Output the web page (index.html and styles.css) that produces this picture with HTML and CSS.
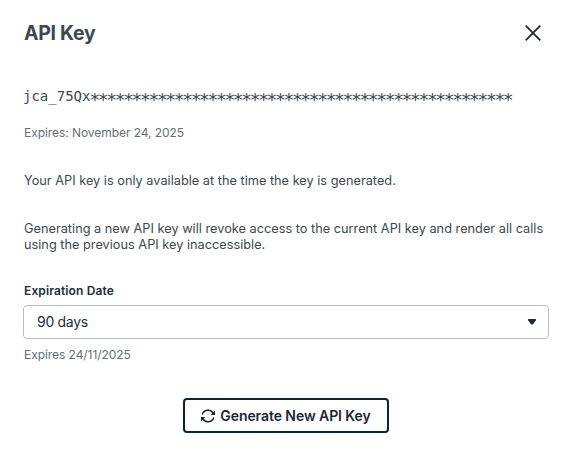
FILE: index.html
```html
<!DOCTYPE html>
<html lang="en">
<head>
    <meta charset="UTF-8">
    <meta name="viewport" content="width=device-width, initial-scale=1.0">
    <title>API Key</title>
    <link rel="stylesheet" href="styles.css">
</head>
<body>
<div class="modal">
    <div class="modal-header">
        <h1>API Key</h1>
        <button class="close-button" aria-label="Close">
            <svg width="16" height="16" viewBox="0 0 16 16"><path d="M.7 .7L15.300 15.300M15.300 .7L.7 15.300"/></svg>
        </button>
    </div>

    <div class="api-key">jca_75Qx<span class="mask">**************************************************</span></div>
    <p class="expires">Expires: November 24, 2025</p>
    <p class="notice">Your API key is only available at the time the key is generated.</p>
    <p class="warning">Generating a new API key will revoke access to the current API key and render all calls using the previous API key inaccessible.</p>

    <label class="field-label" id="expiration-label">Expiration Date</label>
    <div class="select" role="combobox" aria-labelledby="expiration-label" tabindex="0">
        <span>90 days</span>
        <svg width="8" height="6" viewBox="0 0 8 6"><path d="M.5 0h7q.8.500.3 1.400L5 5.300q-1 .9-2 0L.2 1.400Q-.3.500.5 0z"/></svg>
    </div>
    <p class="hint">Expires 24/11/2025</p>

    <div class="modal-footer">
        <button class="generate-button">
            <svg width="14" height="14" viewBox="0 0 14 14">
                <path d="M1.200 5.500A6 6 0 0 1 12 4M12.800 8.500A6 6 0 0 1 2 10"/>
                <path class="arrow" d="M14 1.500V6H9.500zM0 12.500V8H4.500z"/>
            </svg>
            Generate New API Key
        </button>
    </div>
</div>
</body>
</html>
```
FILE: styles.css
```css
body {
    margin: 0;
    background-color: #fff;
    font-family: Inter, sans-serif;
    color: #3c4850;
}
.modal {
    padding: 21px 23px 0 24px;
}
.modal-header {
    display: flex;
    align-items: center;
    justify-content: space-between;
    height: 24px;
}
h1 {
    margin: 0;
    font-size: 19.5px;
    font-weight: 650;
    letter-spacing: -0.3px;
}
button {
    font-family: inherit;
    cursor: pointer;
}
.close-button {
    display: flex;
    padding: 0;
    margin-right: 8px;
    border: none;
    background: none;
}
.close-button svg {
    fill: none;
    stroke: #202d38;
    stroke-width: 1.8;
}
.api-key {
    margin: 42px 0 0 -1px;
    font-family: "DejaVu Sans Mono", monospace;
    font-size: 14px;
    line-height: 18px;
    white-space: nowrap;
}
.mask {
    margin-left: -1px;
    font-size: 18px;
    letter-spacing: -2.4px;
    line-height: 1px;
    vertical-align: -5px;
}
p {
    margin: 0;
    font-size: 12.75px;
    line-height: 16px;
}
.expires {
    margin-top: 20px;
    font-size: 12px;
    letter-spacing: -0.06px;
    color: #646e76;
}
.notice, .warning {
    margin-top: 32px;
}
.field-label {
    display: block;
    margin-top: 30px;
    font-size: 12px;
    line-height: 16px;
    font-weight: 600;
    letter-spacing: 0.12px;
    color: #202d38;
}
.select {
    display: flex;
    align-items: center;
    justify-content: space-between;
    box-sizing: border-box;
    height: 34px;
    margin: 6px 0 0 -1px;
    padding: 0 12px 0 13px;
    border: 1px solid #b9bec2;
    border-radius: 4px;
    font-size: 14px;
    letter-spacing: -0.3px;
    color: #202d38;
}
.select span {
    padding-bottom: 1px;
}
.select svg {
    fill: #202d38;
}
.hint {
    margin-top: 8px;
    font-size: 12px;
    letter-spacing: -0.06px;
    color: #646e76;
}
.modal-footer {
    display: flex;
    justify-content: center;
    margin-top: 35px;
    padding-right: 1px;
}
.generate-button {
    display: flex;
    align-items: center;
    justify-content: center;
    gap: 5px;
    width: 206px;
    height: 35px;
    padding: 0;
    border: 2px solid #06263f;
    border-radius: 4px;
    background-color: #fff;
    color: #202637;
    font-size: 14px;
    font-weight: 600;
    letter-spacing: -0.07px;
}
.generate-button svg {
    fill: none;
    stroke: #202637;
    stroke-width: 1.5;
}
.generate-button .arrow {
    fill: #202637;
    stroke: none;
}
```
